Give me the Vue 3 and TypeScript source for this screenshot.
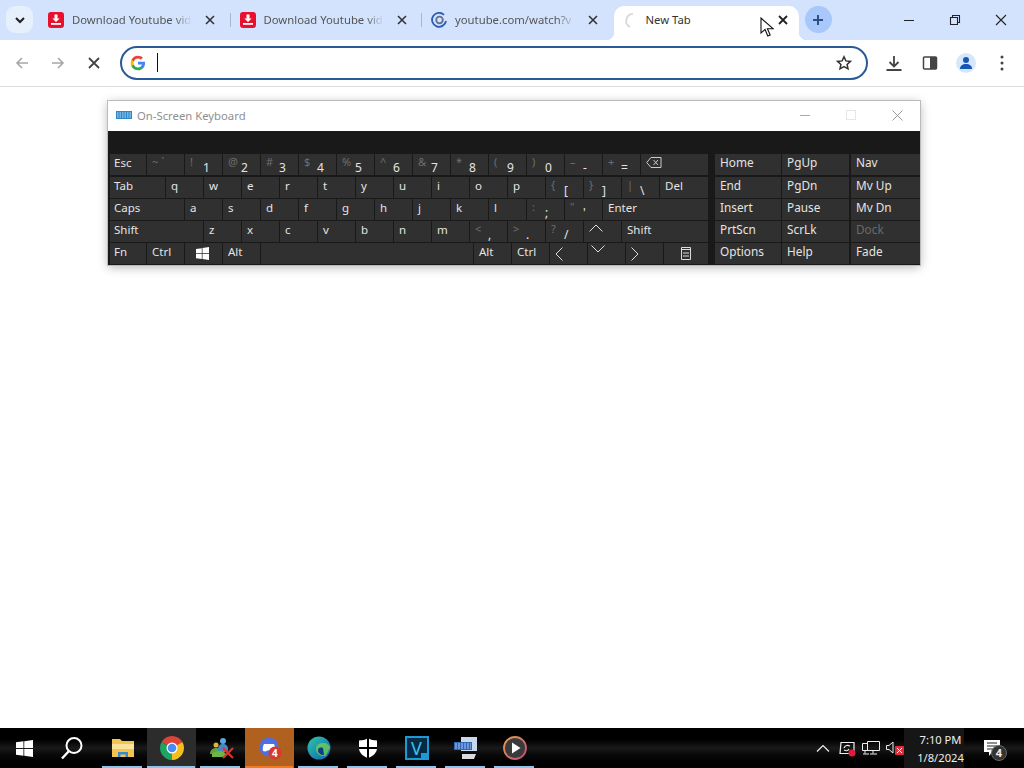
<script setup lang="ts">
interface Key {
    main?: string;
    shift?: string;
    size?: string;
    icon?: string;
    dim?: boolean;
}

interface Tab {
    title: string;
    favicon: string;
}

const tabs: Tab[] = [
    { title: "Download Youtube vid", favicon: "download" },
    { title: "Download Youtube vid", favicon: "download" },
    { title: "youtube.com/watch?v", favicon: "swirl" },
];

const pairKeys = (pairs: string[][]): Key[] =>
    pairs.map(([shift, main]) => ({ shift, main }));

const letterKeys = (letters: string): Key[] =>
    letters.split("").map((main) => ({ main }));

const mainRows: Key[][] = [
    [
        { main: "Esc", size: "s36" },
        { shift: "~ `" },
        ...pairKeys([
            ["!", "1"],
            ["@", "2"],
            ["#", "3"],
            ["$", "4"],
            ["%", "5"],
            ["^", "6"],
            ["&", "7"],
            ["*", "8"],
            ["(", "9"],
            [")", "0"],
            ["–", "-"],
            ["+", "="],
        ]),
        { icon: "backspace", size: "fill" },
    ],
    [
        { main: "Tab", size: "s56" },
        ...letterKeys("qwertyuiop"),
        ...pairKeys([
            ["{", "["],
            ["}", "]"],
            ["|", "\\"],
        ]),
        { main: "Del", size: "fill" },
    ],
    [
        { main: "Caps", size: "s75" },
        ...letterKeys("asdfghjkl"),
        ...pairKeys([
            [":", ";"],
            ['"', "'"],
        ]),
        { main: "Enter", size: "fill" },
    ],
    [
        { main: "Shift", size: "s94" },
        ...letterKeys("zxcvbnm"),
        ...pairKeys([
            ["<", ","],
            [">", "."],
            ["?", "/"],
        ]),
        { icon: "up" },
        { main: "Shift", size: "fill" },
    ],
    [
        { main: "Fn", size: "s36" },
        { main: "Ctrl" },
        { icon: "win" },
        { main: "Alt" },
        { size: "s212" },
        { main: "Alt" },
        { main: "Ctrl" },
        { icon: "left" },
        { icon: "down" },
        { icon: "right" },
        { icon: "menu", size: "fill" },
    ],
];

const navKeys: Key[] = [
    { main: "Home" },
    { main: "PgUp" },
    { main: "End" },
    { main: "PgDn" },
    { main: "Insert" },
    { main: "Pause" },
    { main: "PrtScn" },
    { main: "ScrLk" },
    { main: "Options" },
    { main: "Help" },
];

const sideKeys: Key[] = [
    { main: "Nav" },
    { main: "Mv Up" },
    { main: "Mv Dn" },
    { main: "Dock", dim: true },
    { main: "Fade" },
];
</script>

<template>
    <div class="screen">
        <div class="tabstrip">
            <div class="tab-search">
                <svg width="12" height="12" viewBox="0 0 12 12">
                    <path d="M2 4l4 4 4-4" fill="none" stroke="#1f1f1f" stroke-width="2" />
                </svg>
            </div>
            <div class="tabs">
                <div v-for="(tab, index) in tabs" :key="index" class="tab">
                    <svg v-if="tab.favicon === 'download'" width="16" height="16" viewBox="0 0 16 16">
                        <rect width="16" height="16" rx="3" fill="#e8112d" />
                        <path d="M6.5 2.5h3v4h2.2L8 10 4.3 6.5h2.2z" fill="#fff" />
                        <rect x="3" y="11" width="10" height="1.8" fill="#fff" />
                    </svg>
                    <svg v-else width="16" height="16" viewBox="0 0 16 16">
                        <path d="M13 2.8A7 7 0 1 0 15 9" fill="none" stroke="#2a5bb8" stroke-width="1.8" />
                        <circle cx="8.5" cy="8" r="3.3" fill="none" stroke="#5c6f8c" stroke-width="1.8" />
                    </svg>
                    <span class="tab-title">{{ tab.title }}</span>
                    <svg class="tab-close" width="10" height="10" viewBox="0 0 10 10">
                        <path d="M1 1l8 8M9 1l-8 8" stroke="#333" stroke-width="1.6" />
                    </svg>
                </div>
                <div class="tab tab-active">
                    <svg width="16" height="16" viewBox="0 0 16 16">
                        <path d="M11 1.8A7 7 0 0 0 8 15" fill="none" stroke="#d4d7dc" stroke-width="1.8" />
                    </svg>
                    <span class="tab-title active-title">New Tab</span>
                    <svg class="tab-close" width="10" height="10" viewBox="0 0 10 10">
                        <path d="M1 1l8 8M9 1l-8 8" stroke="#222" stroke-width="1.8" />
                    </svg>
                </div>
            </div>
            <div class="new-tab">
                <svg width="12" height="12" viewBox="0 0 12 12">
                    <path d="M6 1v10M1 6h10" stroke="#2c4f86" stroke-width="2" />
                </svg>
            </div>
            <div class="window-controls">
                <svg width="12" height="12" viewBox="0 0 12 12">
                    <path d="M1 6.5h10" stroke="#222" />
                </svg>
                <svg width="12" height="12" viewBox="0 0 12 12">
                    <path d="M1.5 3.5h7v7h-7zM3.5 3.5v-2h7v7h-2" fill="none" stroke="#222" stroke-width="1.1" />
                </svg>
                <svg width="12" height="12" viewBox="0 0 12 12">
                    <path d="M1 1l10 10M11 1l-10 10" stroke="#222" stroke-width="1.1" />
                </svg>
            </div>
        </div>

        <div class="toolbar">
            <svg class="nav-icon" width="16" height="16" viewBox="0 0 16 16">
                <path d="M14 8H3M8 3L3 8l5 5" fill="none" stroke="#a5a7aa" stroke-width="1.6" />
            </svg>
            <svg class="nav-icon" width="16" height="16" viewBox="0 0 16 16">
                <path d="M2 8h11M8 3l5 5-5 5" fill="none" stroke="#a5a7aa" stroke-width="1.6" />
            </svg>
            <svg class="nav-icon" width="16" height="16" viewBox="0 0 16 16">
                <path d="M3 3l10 10M13 3L3 13" stroke="#444" stroke-width="1.8" />
            </svg>
            <div class="omnibox">
                <svg width="16" height="16" viewBox="0 0 24 24">
                    <path fill="#4285f4" d="M22.56 12.25c0-.78-.07-1.53-.2-2.25H12v4.26h5.92c-.26 1.37-1.04 2.53-2.21 3.31v2.77h3.57c2.08-1.92 3.28-4.74 3.28-8.09z" />
                    <path fill="#34a853" d="M12 23c2.97 0 5.46-.98 7.28-2.66l-3.57-2.77c-.98.66-2.23 1.06-3.71 1.06-2.86 0-5.29-1.93-6.16-4.53H2.18v2.84C3.99 20.53 7.7 23 12 23z" />
                    <path fill="#fbbc05" d="M5.84 14.09c-.22-.66-.35-1.36-.35-2.09s.13-1.43.35-2.09V7.07H2.18C1.43 8.55 1 10.22 1 12s.43 3.45 1.18 4.93l3.66-2.84z" />
                    <path fill="#ea4335" d="M12 5.38c1.62 0 3.06.56 4.21 1.64l3.15-3.15C17.45 2.09 14.97 1 12 1 7.7 1 3.99 3.47 2.18 7.07l3.66 2.84c.87-2.6 3.3-4.53 6.16-4.53z" />
                </svg>
                <span class="caret"></span>
                <svg class="star" width="16" height="16" viewBox="0 0 16 16">
                    <path d="M8 1.8l1.9 4.1 4.5.5-3.3 3 .9 4.4L8 11.6l-4 2.2.9-4.4-3.3-3 4.5-.5z" fill="none" stroke="#333" stroke-width="1.5" />
                </svg>
            </div>
            <div class="toolbar-actions">
                <svg width="18" height="18" viewBox="0 0 18 18">
                    <path d="M9 2v10M4.5 8L9 12.5 13.5 8M1.5 16h15" fill="none" stroke="#444" stroke-width="1.8" />
                </svg>
                <svg width="16" height="16" viewBox="0 0 16 16">
                    <rect x="1.5" y="2" width="13" height="12" rx="1" fill="#fff" stroke="#444" stroke-width="1.5" />
                    <rect x="8" y="2" width="6.5" height="12" fill="#444" />
                </svg>
                <div class="avatar">
                    <svg width="14" height="14" viewBox="0 0 14 14">
                        <circle cx="7" cy="4" r="3" fill="#1557b8" />
                        <path d="M1 13c0-3.5 2.5-5 6-5s6 1.5 6 5z" fill="#1557b8" />
                    </svg>
                </div>
                <svg width="4" height="16" viewBox="0 0 4 16">
                    <circle cx="2" cy="2" r="1.5" fill="#444" />
                    <circle cx="2" cy="8" r="1.5" fill="#444" />
                    <circle cx="2" cy="14" r="1.5" fill="#444" />
                </svg>
            </div>
        </div>

        <div class="page">
            <div class="osk">
                <div class="osk-title">
                    <svg width="16" height="8" viewBox="0 0 16 8">
                        <rect width="16" height="8" fill="#2f87c9" />
                        <path d="M1 2h14M1 4h14M1 6h14" stroke="#bfe0f5" stroke-dasharray="1.5 1" />
                    </svg>
                    <span class="osk-name">On-Screen Keyboard</span>
                    <div class="osk-controls">
                        <svg width="10" height="10" viewBox="0 0 10 10">
                            <path d="M0 5.5h10" stroke="#aaa" />
                        </svg>
                        <svg width="10" height="10" viewBox="0 0 10 10">
                            <rect x=".5" y=".5" width="9" height="9" fill="none" stroke="#e6e6e6" />
                        </svg>
                        <svg width="11" height="11" viewBox="0 0 11 11">
                            <path d="M.5.5l10 10M10.5.5l-10 10" stroke="#999" />
                        </svg>
                    </div>
                </div>
                <div class="osk-band"></div>
                <div class="osk-keys">
                    <div class="key-main">
                        <div v-for="(row, rowIndex) in mainRows" :key="rowIndex" class="key-row">
                            <div
                                v-for="(item, keyIndex) in row"
                                :key="keyIndex"
                                class="key"
                                :class="[item.size, { pair: item.shift }]"
                            >
                                <span v-if="item.shift" class="shift">{{ item.shift }}</span>
                                <span v-if="item.main" :class="{ lower: item.shift }">{{ item.main }}</span>
                                <svg v-if="item.icon === 'backspace'" class="key-icon" width="16" height="11" viewBox="0 0 16 11">
                                    <path d="M5 .5h10v10H5L.7 5.5zM7.5 3l4.5 5M12 3L7.5 8" fill="none" stroke="#ccc" />
                                </svg>
                                <svg v-if="item.icon === 'win'" class="key-icon win-icon" width="13" height="13" viewBox="0 0 13 13">
                                    <path d="M0 2l5.8-.8v5H0zM6.5 1L13 0v6.2H6.5zM0 7h5.8v5L0 11.2zM6.5 7H13v6l-6.5-1z" fill="#fff" />
                                </svg>
                                <svg v-if="item.icon === 'up'" class="key-icon" width="14" height="8" viewBox="0 0 14 8">
                                    <path d="M.5 7.5L7 1l6.5 6.5" fill="none" stroke="#ddd" />
                                </svg>
                                <svg v-if="item.icon === 'down'" class="key-icon arrow-down" width="14" height="8" viewBox="0 0 14 8">
                                    <path d="M.5.5L7 7 13.5.5" fill="none" stroke="#ddd" />
                                </svg>
                                <svg v-if="item.icon === 'left'" class="key-icon arrow-side" width="8" height="14" viewBox="0 0 8 14">
                                    <path d="M7.5.5L1 7l6.5 6.5" fill="none" stroke="#ddd" />
                                </svg>
                                <svg v-if="item.icon === 'right'" class="key-icon arrow-side" width="8" height="14" viewBox="0 0 8 14">
                                    <path d="M.5.5L7 7 .5 13.5" fill="none" stroke="#ddd" />
                                </svg>
                                <svg v-if="item.icon === 'menu'" class="key-icon menu-icon" width="10" height="13" viewBox="0 0 10 13">
                                    <path d="M.5.5h9v12h-9z" fill="none" stroke="#ddd" />
                                    <path d="M0 2.5h10M2 6h6M2 9h6" stroke="#ddd" />
                                </svg>
                            </div>
                        </div>
                    </div>
                    <div class="key-nav">
                        <div v-for="item in navKeys" :key="item.main" class="key nav-key">{{ item.main }}</div>
                    </div>
                    <div class="key-side">
                        <div
                            v-for="item in sideKeys"
                            :key="item.main"
                            class="key nav-key"
                            :class="{ dim: item.dim }"
                        >
                            {{ item.main }}
                        </div>
                    </div>
                </div>
            </div>

            <svg class="pointer" width="14" height="21" viewBox="0 0 14 21">
                <path d="M1 1v15l4-3.5 2.8 6.5 2.4-1-2.800-6.300H13z" fill="#fff" stroke="#111" stroke-width="1.1" />
            </svg>
        </div>

        <div class="taskbar">
            <div class="task-fixed">
                <svg width="17" height="17" viewBox="0 0 13 13">
                    <path d="M0 1.8L5.7 1v5.200H0zM6.3.9L13 0v6.200H6.300zM0 6.800h5.700V12L0 11.200zM6.300 6.800H13V13l-6.700-.9z" fill="#fff" />
                </svg>
            </div>
            <div class="task-fixed">
                <svg width="24" height="24" viewBox="0 0 24 24">
                    <circle cx="14" cy="9.5" r="7.5" fill="none" stroke="#fff" stroke-width="2" />
                    <path d="M9 15L2 22.5" stroke="#fff" stroke-width="2.4" />
                </svg>
            </div>
            <div class="task-apps">
                <div class="task-app running">
                    <svg width="22" height="20" viewBox="0 0 22 20">
                        <path d="M0 1h8l2 2h12v16H0z" fill="#f4c453" />
                        <rect y="6" width="22" height="5" fill="#fbe29a" />
                        <path d="M6 19v-5h10v5h-2.5v-2.500h-5V19z" fill="#3c89c9" />
                    </svg>
                </div>
                <div class="task-app running active">
                    <svg width="24" height="24" viewBox="0 0 24 24">
                        <path d="M12 12L22.39 6A12 12 0 0 0 1.61 6z" fill="#dd4437" />
                        <path d="M12 12L12 24A12 12 0 0 0 22.39 6z" fill="#f5bf1b" />
                        <path d="M12 12L1.61 6A12 12 0 0 0 12 24z" fill="#1ea362" />
                        <circle cx="12" cy="12" r="5.5" fill="#fff" />
                        <circle cx="12" cy="12" r="4.3" fill="#4a8af4" />
                    </svg>
                </div>
                <div class="task-app running">
                    <svg width="26" height="24" viewBox="0 0 26 24">
                        <circle cx="8" cy="9" r="2.5" fill="#e2b23c" />
                        <path d="M2 18c0-4 3-6 6-6s5 2 5 6z" fill="#58a83d" />
                        <circle cx="15" cy="5" r="3" fill="#5da8dc" />
                        <path d="M10 13c0-3 2-5 5-5s5 2 5 5-2 3-5 3-5 0-5-3z" fill="#4689c4" />
                        <path d="M4 18c3-4 12-4 14 0v3H4z" fill="#6db545" />
                        <path d="M15 12l10 10M25 12L15 22" stroke="#e23030" stroke-width="2.2" />
                    </svg>
                </div>
                <div class="task-app alert">
                    <svg width="24" height="24" viewBox="0 0 24 24">
                        <circle cx="11" cy="11" r="9.5" fill="#4f6fe0" />
                        <path d="M6 8h10c1 2 1.5 4.5 1 7-1.500.5-3 .8-4-.5H9c-1 1.300-2.500 1-4 .5-.5-2.500 0-5 1-7z" fill="#fff" />
                        <circle cx="17" cy="17" r="6.5" fill="#d9382f" />
                    </svg>
                    <span class="app-badge">4</span>
                </div>
                <div class="task-app running">
                    <svg width="24" height="24" viewBox="0 0 24 24">
                        <defs>
                            <linearGradient id="edge" x1="0" y1="0" x2="1" y2="1">
                                <stop offset="0" stop-color="#2fc6a5" />
                                <stop offset="1" stop-color="#0d62b8" />
                            </linearGradient>
                        </defs>
                        <circle cx="12" cy="12" r="11.5" fill="url(#edge)" />
                        <path d="M23 12c0-3-3-5-7-5-5 0-7 3-7 6 0 4 3 7 7 7 1 0 2-.2 3-.6" fill="#7ad64a" opacity=".7" />
                        <path d="M16 12c-3-1-5 0-5 2.500 0 2.500 2.500 4.500 6 4.500" fill="#0a3f80" />
                    </svg>
                </div>
                <div class="task-app running">
                    <svg width="18" height="20" viewBox="0 0 18 20">
                        <path d="M9 0c2.5 1.8 5.5 2.5 9 2.5V10c0 4.500-3.500 8-9 10-5.500-2-9-5.500-9-10V2.500C3.500 2.500 6.500 1.800 9 0z" fill="#fff" />
                        <path d="M8 0v20h2V0zM0 9v2h18V9z" fill="#000" />
                    </svg>
                </div>
                <div class="task-app running">
                    <div class="vegas">V<i></i></div>
                </div>
                <div class="task-app running">
                    <svg width="24" height="24" viewBox="0 0 24 24">
                        <path d="M7 1h16v14H7z" fill="#c8d8ec" />
                        <path d="M8 18h14l-2 5H8z" fill="#d9dde2" />
                        <path d="M0 6h18v8H0z" fill="#3167bb" />
                        <path d="M1 8h16M1 10h16M1 12h16" stroke="#a9c8f0" stroke-dasharray="2 1" />
                    </svg>
                </div>
                <div class="task-app running">
                    <svg width="24" height="24" viewBox="0 0 24 24">
                        <defs>
                            <linearGradient id="ring" x1="0" y1="0" x2="1" y2="1">
                                <stop offset="0" stop-color="#e6a04f" />
                                <stop offset="1" stop-color="#c04a7a" />
                            </linearGradient>
                        </defs>
                        <circle cx="12" cy="12" r="11" fill="#3a3a3a" stroke="url(#ring)" stroke-width="1.8" />
                        <path d="M9 6.5l8.5 5.5L9 17.500z" fill="#fff" />
                    </svg>
                </div>
            </div>
            <div class="tray">
                <div class="tray-icon">
                    <svg width="14" height="8" viewBox="0 0 14 8">
                        <path d="M1 7.5l6-6 6 6" fill="none" stroke="#eee" stroke-width="1.2" />
                    </svg>
                </div>
                <div class="tray-icon">
                    <svg width="18" height="17" viewBox="0 0 18 17">
                        <path d="M3 2.5h13v11H2z" fill="none" stroke="#eee" stroke-width="1.2" />
                        <path d="M6 8c1-3 4-3 6-2M11 9c-1 2-3 2-5 1" fill="none" stroke="#eee" stroke-width="1.1" />
                        <circle cx="14" cy="13" r="3.5" fill="#e01b3c" />
                    </svg>
                </div>
                <div class="tray-icon">
                    <svg width="18" height="15" viewBox="0 0 18 15">
                        <path d="M5.5.5h12v9h-12zM.5 2.500h5v7h-5zM3 9.500v3M1 13h6M11 9.500v3M8 13h7" fill="none" stroke="#eee" />
                    </svg>
                </div>
                <div class="tray-icon">
                    <svg width="18" height="14" viewBox="0 0 18 14">
                        <path d="M.5 4.5H3L7 1v11L3 8.500H.5z" fill="none" stroke="#eee" />
                        <rect x="9" y="5" width="9" height="9" rx="1" fill="#d8303f" />
                        <path d="M11 7l5 5M16 7l-5 5" stroke="#fff" />
                    </svg>
                </div>
                <div class="clock">
                    <span>7:10 PM</span>
                    <span>1/8/2024</span>
                </div>
                <div class="notify">
                    <svg width="16" height="16" viewBox="0 0 16 16">
                        <path d="M0 0h16v12H8l-3 4v-4H0z" fill="#fff" />
                        <path d="M3 3h10M3 6h10M3 9h7" stroke="#222" />
                    </svg>
                    <span class="notify-badge">4</span>
                </div>
            </div>
        </div>
    </div>
</template>

<style scoped>
.screen {
    width: 1024px;
    height: 768px;
    display: flex;
    flex-direction: column;
    overflow: hidden;
    background: #fff;
    font-family: "Noto Sans", "Open Sans", sans-serif;
}

.tabstrip {
    height: 40px;
    flex: 0 0 auto;
    display: flex;
    background: #d3e3fd;
    padding: 6px 0 0 6px;
    box-sizing: border-box;
}

.tab-search {
    width: 27px;
    height: 27px;
    border-radius: 9px;
    background: #e6effc;
    display: flex;
    align-items: center;
    justify-content: center;
}

.tabs {
    display: flex;
    margin-left: 5px;
}

.tab {
    position: relative;
    width: 191.5px;
    height: 34px;
    padding: 0 0 7px 10px;
    box-sizing: border-box;
    display: flex;
    align-items: center;
    font-size: 11.3px;
    color: #555;
}

.tab + .tab::before {
    content: "";
    position: absolute;
    left: 0;
    top: 7px;
    height: 14px;
    width: 1px;
    background: #a9b5c8;
}

.tab-title {
    width: 120px;
    margin-left: 8px;
    white-space: nowrap;
    overflow: hidden;
    mask-image: linear-gradient(to right, #000 85%, transparent);
}

.tab-close {
    margin-left: 13px;
}

.tab-active {
    margin-left: 1px;
    width: 185px;
    background: #fff;
    border-radius: 10px 10px 0 0;
    padding-left: 8px;
    color: #333;
}

.tab-active::before {
    display: none;
}

.tab-active::after {
    content: "";
    position: absolute;
    left: -8px;
    right: -8px;
    bottom: 0;
    height: 8px;
    background:
        radial-gradient(circle at 0 0, #d3e3fd 8px, #fff 8.5px) left / 8px 8px no-repeat,
        radial-gradient(circle at 100% 0, #d3e3fd 8px, #fff 8.5px) right / 8px 8px no-repeat;
}

.active-title {
    width: 115px;
    margin-left: 8px;
    mask-image: none;
}

.tab-active .tab-close {
    margin-left: 17px;
}

.new-tab {
    width: 27px;
    height: 27px;
    margin-left: 6px;
    border-radius: 50%;
    background: #a8c7fa;
    display: flex;
    align-items: center;
    justify-content: center;
}

.window-controls {
    margin-left: auto;
    width: 138px;
    height: 40px;
    margin-top: -6px;
    display: grid;
    grid-template-columns: repeat(3, 46px);
    justify-items: center;
    align-items: center;
    align-self: flex-start;
}

.toolbar {
    height: 47px;
    flex: 0 0 auto;
    box-sizing: border-box;
    display: flex;
    align-items: center;
    padding: 0 4px 1px 4px;
    background: #fff;
    border-bottom: 1px solid #dcdcdc;
    border-radius: 10px 10px 0 0;
}

.nav-icon {
    width: 36px;
    flex: 0 0 auto;
}

.omnibox {
    width: 748px;
    height: 34px;
    margin-left: 8px;
    box-sizing: border-box;
    border: 2px solid #2a5a97;
    border-radius: 17px;
    display: flex;
    align-items: center;
    padding: 0 14px 0 8px;
}

.caret {
    width: 1px;
    height: 19px;
    margin-left: 11px;
    background: #111;
}

.star {
    margin-left: auto;
}

.toolbar-actions {
    margin-left: 8px;
    display: grid;
    grid-template-columns: repeat(4, 36px);
    justify-items: center;
    align-items: center;
}

.avatar {
    width: 20px;
    height: 20px;
    border-radius: 50%;
    background: #d8e6fa;
    display: flex;
    align-items: center;
    justify-content: center;
}

.page {
    position: relative;
    flex: 1 1 auto;
    background: #fff;
}

.osk {
    position: absolute;
    left: 108px;
    top: 14px;
    width: 812px;
    height: 164px;
    background: #191919;
    box-shadow: 0 0 0 1px #bbb, 0 2px 10px rgba(0, 0, 0, 0.3);
}

.osk-title {
    height: 30px;
    box-sizing: border-box;
    padding: 0 0 2px 8px;
    background: #fff;
    display: flex;
    align-items: center;
}

.osk-name {
    margin-left: 5px;
    font-size: 11.3px;
    color: #8f8f8f;
}

.osk-controls {
    margin-left: auto;
    width: 138px;
    display: grid;
    grid-template-columns: repeat(3, 46px);
    justify-items: center;
    align-items: center;
}

.osk-band {
    height: 23px;
}

.osk-keys {
    display: flex;
    padding-left: 2px;
}

.key-main {
    width: 598px;
    display: flex;
    flex-direction: column;
    gap: 1px;
}

.key-row {
    display: flex;
    gap: 1px;
    height: 21px;
}

.key-row:first-child {
    margin-bottom: 1px;
}

.key {
    width: 37px;
    height: 21px;
    flex: 0 0 auto;
    box-sizing: border-box;
    padding-left: 5px;
    background: #303030;
    color: #e4e4e4;
    font-size: 11.5px;
    line-height: 17px;
    white-space: nowrap;
    overflow: hidden;
}

.s36 {
    width: 36px;
    padding-left: 4px;
}

.s56 {
    width: 55px;
    padding-left: 4px;
}

.s75 {
    width: 74px;
    padding-left: 4px;
}

.s94 {
    width: 93px;
    padding-left: 4px;
}

.s212 {
    width: 212px;
}

.fill {
    flex: 1 1 auto;
}

.pair {
    display: grid;
    grid-template-columns: 13px 1fr;
}

.shift {
    color: #6e6e6e;
    font-size: 11px;
    line-height: 15px;
}

.lower {
    padding-top: 5px;
    font-size: 12px;
}

.key-icon {
    display: block;
    margin-top: 3px;
}

.win-icon {
    margin: 4px 0 0 6px;
}

.arrow-side {
    margin-top: 4px;
}

.arrow-down {
    margin: 2px 0 0 -2px;
}

.menu-icon {
    margin: 4px 0 0 12px;
}

.key-nav {
    margin-left: 7px;
    width: 134px;
    display: grid;
    grid-template-columns: 66px 67px;
    gap: 1px;
    align-content: start;
}

.key-side {
    margin-left: 2px;
    width: 69px;
    display: grid;
    gap: 1px;
    align-content: start;
}

.key-nav .key:nth-child(-n + 2),
.key-side .key:first-child {
    margin-bottom: 1px;
}

.nav-key {
    width: auto;
    padding-left: 5px;
    font-size: 11.8px;
}

.dim {
    color: #6a6a6a;
}

.pointer {
    position: absolute;
    left: 760px;
    top: -70px;
    z-index: 5;
}

.taskbar {
    height: 40px;
    flex: 0 0 auto;
    display: flex;
    background: linear-gradient(to bottom, #000 30%, #1a1a1a 50%, #0a0a0a 65%, #000 85%);
}

.task-fixed {
    width: 48px;
    display: flex;
    align-items: center;
    justify-content: center;
}

.task-apps {
    display: flex;
    margin-left: 2px;
}

.task-app {
    position: relative;
    width: 49px;
    display: flex;
    align-items: center;
    justify-content: center;
}

.task-app.running::after {
    content: "";
    position: absolute;
    left: 4px;
    right: 5px;
    bottom: 0;
    height: 2px;
    background: #8cc4ec;
}

.task-app.active {
    background: #2c2c2c;
}

.task-app.active::after {
    left: 0;
    right: 1px;
}

.task-app.alert {
    background: #b0601f;
}

.task-app.alert::after {
    content: "";
    position: absolute;
    left: 0;
    right: 1px;
    bottom: 0;
    height: 2px;
    background: #f47a20;
}

.app-badge {
    position: absolute;
    left: 27px;
    top: 19px;
    font-size: 10px;
    font-weight: 700;
    line-height: 12px;
    color: #fff;
}

.vegas {
    position: relative;
    width: 24px;
    height: 24px;
    box-sizing: border-box;
    border: 2px solid #1c9ad6;
    background: #062a44;
    color: #3cc0f0;
    font-size: 18px;
    line-height: 20px;
    text-align: center;
}

.vegas i {
    position: absolute;
    right: -2px;
    bottom: -2px;
    width: 8px;
    height: 7px;
    background: #1c9ad6;
}

.tray {
    margin-left: auto;
    display: flex;
    padding-right: 8px;
    color: #eee;
}

.tray-icon {
    width: 24px;
    display: flex;
    align-items: center;
    justify-content: center;
}

.clock {
    width: 60px;
    margin-left: -3px;
    padding-left: 13px;
    box-sizing: border-box;
    display: flex;
    flex-direction: column;
    align-items: center;
    justify-content: center;
    gap: 3px;
    font-size: 11.2px;
    line-height: 15px;
    background: #161616;
}

.notify {
    position: relative;
    width: 48px;
    margin-left: 4px;
    display: flex;
    align-items: center;
    justify-content: center;
}

.notify-badge {
    position: absolute;
    left: 23px;
    top: 17px;
    width: 16px;
    height: 16px;
    border-radius: 50%;
    background: #333;
    border: 1px solid #666;
    box-sizing: border-box;
    font-size: 11px;
    font-weight: 700;
    line-height: 14px;
    text-align: center;
}
</style>
